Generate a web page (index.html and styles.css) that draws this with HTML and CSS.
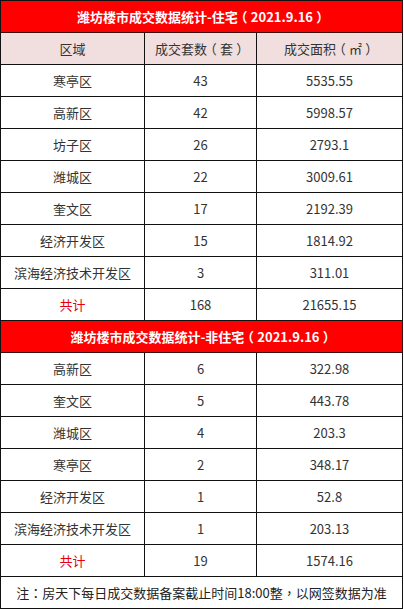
FILE: index.html
```html
<!DOCTYPE html>
<html lang="zh-CN">
<head>
<meta charset="utf-8">
<title>潍坊楼市成交数据统计</title>
<link rel="stylesheet" href="styles.css">
</head>
<body>
<div class="sheet">
  <div class="row title">潍坊楼市成交数据统计-住宅<span class="pp">（</span>2021.9.16<span class="pp">）</span></div>
  <div class="row head"><div class="c">区域</div><div class="c">成交套数<span class="pp">（</span>套<span class="pp">）</span></div><div class="c">成交面积<span class="pp">（</span>㎡<span class="pp">）</span></div></div>
  <div class="row"><div class="c">寒亭区</div><div class="c">43</div><div class="c">5535.55</div></div>
  <div class="row"><div class="c">高新区</div><div class="c">42</div><div class="c">5998.57</div></div>
  <div class="row"><div class="c">坊子区</div><div class="c">26</div><div class="c">2793.1</div></div>
  <div class="row"><div class="c">潍城区</div><div class="c">22</div><div class="c">3009.61</div></div>
  <div class="row"><div class="c">奎文区</div><div class="c">17</div><div class="c">2192.39</div></div>
  <div class="row"><div class="c">经济开发区</div><div class="c">15</div><div class="c">1814.92</div></div>
  <div class="row"><div class="c">滨海经济技术开发区</div><div class="c">3</div><div class="c">311.01</div></div>
  <div class="row"><div class="c total">共计</div><div class="c">168</div><div class="c">21655.15</div></div>
  <div class="row title">潍坊楼市成交数据统计-非住宅<span class="pp">（</span>2021.9.16<span class="pp">）</span></div>
  <div class="row"><div class="c">高新区</div><div class="c">6</div><div class="c">322.98</div></div>
  <div class="row"><div class="c">奎文区</div><div class="c">5</div><div class="c">443.78</div></div>
  <div class="row"><div class="c">潍城区</div><div class="c">4</div><div class="c">203.3</div></div>
  <div class="row"><div class="c">寒亭区</div><div class="c">2</div><div class="c">348.17</div></div>
  <div class="row"><div class="c">经济开发区</div><div class="c">1</div><div class="c">52.8</div></div>
  <div class="row"><div class="c">滨海经济技术开发区</div><div class="c">1</div><div class="c">203.13</div></div>
  <div class="row"><div class="c total">共计</div><div class="c">19</div><div class="c">1574.16</div></div>
  <div class="row note">注<span class="p">：</span>房天下每日成交数据备案截止时间18:00整<span class="p">，</span>以网签数据为准</div>
</div>
</body>
</html>
```
FILE: styles.css
```css
html, body {
  margin: 0;
  padding: 0;
  background: #ffffff;
}
.sheet {
  width: 402px;
  border-left: 1px solid #111;
  border-top: 1px solid #111;
  font-family: "Noto Sans CJK SC", "Microsoft YaHei", sans-serif;
  font-size: 13px;
  color: #333;
}
.p {
  font-family: "Noto Sans CJK TC", "Noto Sans CJK SC", sans-serif;
}
.pp {
  font-feature-settings: "halt";
  padding: 0 3.25px;
}
.row {
  display: grid;
  grid-template-columns: 144px 112px 146px;
  height: 32px;
}
.c {
  border-right: 1px solid #111;
  border-bottom: 1px solid #111;
  display: flex;
  align-items: center;
  justify-content: center;
  white-space: nowrap;
}
.head {
  background: #f1dfdf;
}
.title {
  display: flex;
  align-items: center;
  justify-content: center;
  background: #ff0000;
  color: #ffffff;
  font-weight: bold;
  border-right: 1px solid #3a1010;
  border-bottom: 1px solid #3a1010;
  box-sizing: border-box;
  width: 402px;
}
.note {
  display: flex;
  align-items: center;
  justify-content: center;
  border-right: 1px solid #111;
  border-bottom: 1px solid #111;
  box-sizing: border-box;
  width: 402px;
  color: #222;
}
.total {
  color: #e60012;
}
```
